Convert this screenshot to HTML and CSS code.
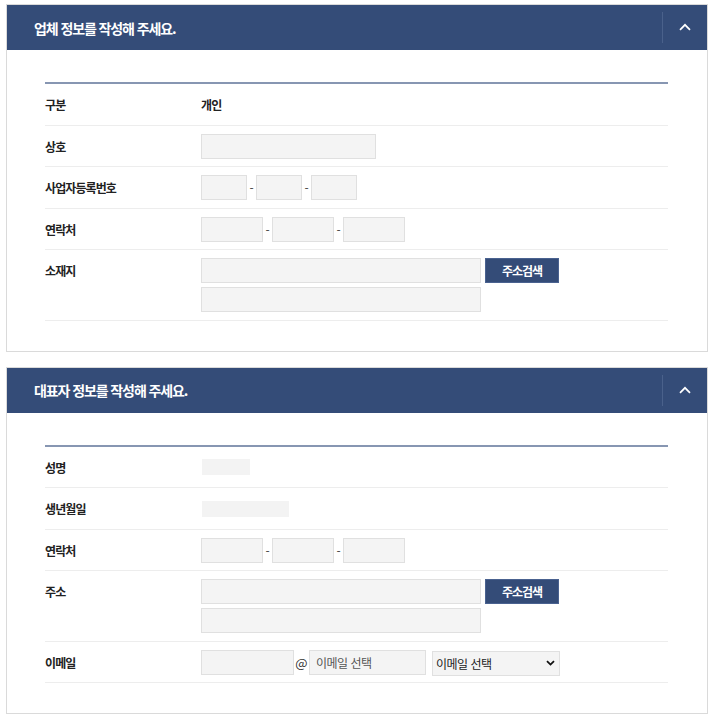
FILE: index.html
```html
<!DOCTYPE html>
<html lang="ko">
<head>
<meta charset="utf-8">
<title>정보 작성</title>
<link rel="stylesheet" href="styles.css">
</head>
<body>
<div class="page">
  <section class="panel">
    <header class="panel-head">
      <h2 class="panel-title">업체 정보를 작성해 주세요.</h2>
      <button class="toggle" type="button" aria-label="접기">
        <svg class="chev" width="12" height="8" viewBox="0 0 12 8"><path d="M1 6.8 L6 1.8 L11 6.8" fill="none" stroke="#fff" stroke-width="1.7"/></svg>
      </button>
    </header>
    <div class="panel-body">
      <div class="form">
        <div class="row">
          <div class="label">구분</div>
          <div class="field"><span class="value">개인</span></div>
        </div>
        <div class="row">
          <div class="label">상호</div>
          <div class="field"><input class="input w175" type="text"></div>
        </div>
        <div class="row">
          <div class="label">사업자등록번호</div>
          <div class="field">
            <div class="line">
              <input class="input w46" type="text"><span class="dash">-</span><input class="input w46" type="text"><span class="dash">-</span><input class="input w46" type="text">
            </div>
          </div>
        </div>
        <div class="row">
          <div class="label">연락처</div>
          <div class="field">
            <div class="line">
              <input class="input w62" type="text"><span class="dash">-</span><input class="input w62" type="text"><span class="dash">-</span><input class="input w62" type="text">
            </div>
          </div>
        </div>
        <div class="row">
          <div class="label">소재지</div>
          <div class="field">
            <div class="line"><input class="input w280" type="text"><button class="btn" type="button">주소검색</button></div>
            <div class="line"><input class="input w280" type="text"></div>
          </div>
        </div>
      </div>
    </div>
  </section>

  <section class="panel">
    <header class="panel-head">
      <h2 class="panel-title">대표자 정보를 작성해 주세요.</h2>
      <button class="toggle" type="button" aria-label="접기">
        <svg class="chev" width="12" height="8" viewBox="0 0 12 8"><path d="M1 6.8 L6 1.8 L11 6.8" fill="none" stroke="#fff" stroke-width="1.7"/></svg>
      </button>
    </header>
    <div class="panel-body">
      <div class="form">
        <div class="row">
          <div class="label">성명</div>
          <div class="field"><div class="line"><span class="masked w48"></span></div></div>
        </div>
        <div class="row">
          <div class="label">생년월일</div>
          <div class="field"><div class="line"><span class="masked w87"></span></div></div>
        </div>
        <div class="row">
          <div class="label">연락처</div>
          <div class="field">
            <div class="line">
              <input class="input w62" type="text"><span class="dash">-</span><input class="input w62" type="text"><span class="dash">-</span><input class="input w62" type="text">
            </div>
          </div>
        </div>
        <div class="row">
          <div class="label">주소</div>
          <div class="field">
            <div class="line"><input class="input w280" type="text"><button class="btn" type="button">주소검색</button></div>
            <div class="line"><input class="input w280" type="text"></div>
          </div>
        </div>
        <div class="row">
          <div class="label">이메일</div>
          <div class="field">
            <div class="line">
              <input class="input w93" type="text"><span class="at">@</span><input class="input w117 domain" type="text" placeholder="이메일 선택">
              <div class="select-wrap">
                <select class="select">
                  <option>이메일 선택</option>
                </select>
                <svg class="select-arrow" width="9" height="6" viewBox="0 0 9 6"><path d="M1 1.2 L4.5 4.6 L8 1.2" fill="none" stroke="#111" stroke-width="1.8"/></svg>
              </div>
            </div>
          </div>
        </div>
      </div>
    </div>
  </section>
</div>
</body>
</html>
```

FILE: styles.css
```css
html, body {
  margin: 0;
  padding: 0;
  background: #ffffff;
}

body {
  font-family: "Noto Sans CJK KR", "Noto Sans", sans-serif;
  color: #222222;
}

.page {
  padding: 4px 6px;
  display: flex;
  flex-direction: column;
  gap: 15px;
}

.panel {
  border: 1px solid #dadada;
  background: #ffffff;
}

.panel-head {
  display: flex;
  align-items: center;
  height: 45px;
  background: #344c78;
  padding-left: 27px;
}

.panel-title {
  flex: 1;
  margin: 0;
  font-size: 14px;
  font-weight: 700;
  line-height: 20px;
  color: #ffffff;
  letter-spacing: -1.1px;
}

.toggle {
  width: 45px;
  height: 31px;
  margin: 0;
  padding: 0;
  border: 0;
  border-left: 1px solid #4a618b;
  background: transparent;
  display: flex;
  align-items: center;
  justify-content: center;
  cursor: pointer;
}

.chev {
  display: block;
  margin-top: -1px;
}

.panel-body {
  padding: 32px 39px 30px 38px;
}

.form {
  border-top: 2px solid #8796b2;
}

.row {
  display: flex;
  padding: 8px 0 7.5px;
  border-bottom: 1px solid #ededed;
}

.label {
  flex: none;
  width: 156px;
  font-size: 12px;
  font-weight: 700;
  line-height: 25px;
  color: #222222;
  letter-spacing: -0.9px;
}

.field {
  display: flex;
  flex-direction: column;
  gap: 4px;
}

.value {
  font-size: 12px;
  font-weight: 700;
  line-height: 25px;
  color: #222222;
  letter-spacing: -0.9px;
}

.line {
  display: flex;
  align-items: center;
  height: 25px;
}

.input {
  box-sizing: border-box;
  height: 25px;
  margin: 0;
  padding: 0 6px;
  border: 1px solid #e0e0e0;
  background: #f4f4f4;
  font-family: "Noto Sans CJK KR", "Noto Sans", sans-serif;
  font-size: 12px;
  color: #333333;
  outline: none;
}

.w46 { width: 46px; }
.w62 { width: 62px; }
.w93 { width: 93px; }
.w117 { width: 117px; }
.w175 { width: 175px; }
.w280 { width: 280px; }

.domain::placeholder {
  color: #555555;
  letter-spacing: -0.5px;
}

.dash {
  width: 9px;
  text-align: center;
  font-size: 12px;
  line-height: 25px;
  color: #444444;
}

.at {
  width: 15px;
  text-align: center;
  font-size: 13px;
  line-height: 25px;
  color: #333333;
}

.btn {
  box-sizing: border-box;
  width: 74px;
  height: 25px;
  margin: 0 0 0 4px;
  padding: 0;
  border: 1px solid #4a6290;
  background: #344c78;
  color: #ffffff;
  font-family: "Noto Sans CJK KR", "Noto Sans", sans-serif;
  font-size: 12px;
  font-weight: 700;
  letter-spacing: -1px;
  cursor: pointer;
}

.masked {
  display: inline-block;
  height: 16px;
  margin-left: 1px;
  background: #f3f3f3;
}

.w48 { width: 48px; }
.w87 { width: 87px; }

.select-wrap {
  position: relative;
  margin-left: 6px;
  width: 128px;
  height: 25px;
}

.select {
  box-sizing: border-box;
  width: 128px;
  height: 25px;
  margin: 0;
  padding: 0 3px;
  border: 1px solid #e0e0e0;
  background: #f4f4f4;
  font-family: "Noto Sans CJK KR", "Noto Sans", sans-serif;
  font-size: 12px;
  color: #222222;
  letter-spacing: -0.5px;
  -webkit-appearance: none;
  appearance: none;
  border-radius: 0;
  outline: none;
}

.select-arrow {
  position: absolute;
  right: 5px;
  top: 10px;
  pointer-events: none;
}
```
